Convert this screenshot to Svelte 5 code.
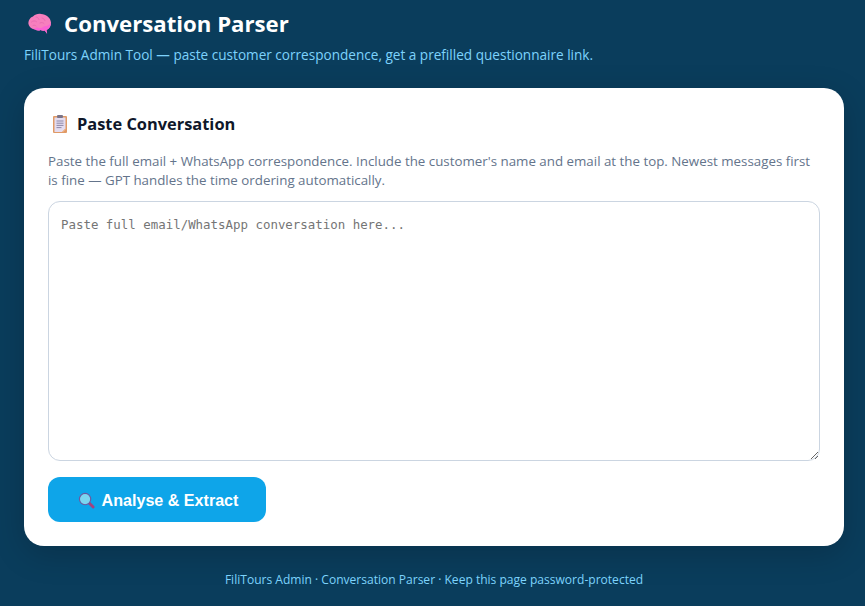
<script>
  let conversation = ''
  let busy = false

  function analyse() {
    busy = conversation.trim().length > 0
  }
</script>

<div class="page">
  <header class="head">
    <h1>
      <svg class="ico brain" viewBox="0 0 26 26" aria-hidden="true">
        <path d="M1.500 13.500C1 9.500 3 6.500 6 5.500 8 3.500 11 2.500 14 3c5 .3 9.500 3.500 10 8.500.3 3.500-1.500 6.300-4.500 7.500l.6 3.800-2.400-3.200c-1.700.5-3 .2-4-.6-2 .9-4.200.6-5.500-.6-2.700-.2-6-2-6.700-5.400z" fill="#f77fbe"/>
        <path d="M4 16.500c2.500 1.500 4.500 1 6-.3 2.500 1.800 5 .8 7-1 2.500.3 5-1 6.700-3-.1 3.300-1.700 5.800-4.200 6.800l.6 3.800-2.400-3.200c-1.700.5-3 .2-4-.6-2 .9-4.200.6-5.500-.6-1.400-.1-3-.7-4.200-1.900z" fill="#fb62d4"/>
        <path d="M4.500 11c1.500-1.500 3.500-1.500 5-.3M9 6c1.500 0 2.500 1 3 2.500M15 7c1.500.3 2.500 1.300 3 2.700M6 14.500c1.200-.5 2.200-.3 3 .4M13 12c1.500-.8 3-.6 4 .5" fill="none" stroke="#ea6db2" stroke-width="1" stroke-linecap="round"/>
      </svg>
      Conversation Parser
    </h1>
    <p>FiliTours Admin Tool — paste customer correspondence, get a prefilled questionnaire link.</p>
  </header>

  <main class="card">
    <h2>
      <svg class="ico clip" viewBox="0 0 18 20" aria-hidden="true">
        <rect x="2" y="2" width="14" height="17" rx="1" fill="#e09a66"/>
        <path d="M3.500 3.500h11v11l-3.500 3.500h-7.500z" fill="#e4dcef"/>
        <path d="M14.500 14.500v1.200l-2.300 2.300h-1.200z" fill="#f3b98c"/>
        <rect x="6" y="1" width="6" height="3" rx="1" fill="#7b7488"/>
        <path d="M5.500 7h7M5.500 9.200h7M5.500 11.400h7M5.500 13.600h5" stroke="#8f88a8" stroke-width="1"/>
      </svg>
      Paste Conversation
    </h2>
    <p class="hint">Paste the full email + WhatsApp correspondence. Include the customer's name and email at the top. Newest messages first is fine — GPT handles the time ordering automatically.</p>
    <textarea bind:value={conversation} placeholder="Paste full email/WhatsApp conversation here..."></textarea>
    <button on:click={analyse} disabled={busy}>
      <svg class="ico lens" viewBox="0 0 18 18" aria-hidden="true">
        <path d="M11.500 11.500l4.500 4.500" stroke="#a3427f" stroke-width="3" stroke-linecap="round"/>
        <circle cx="7.500" cy="7.500" r="6" fill="#7bd6f0" stroke="#6a5aa0" stroke-width="1.200"/>
      </svg>
      <span>Analyse &amp; Extract</span>
    </button>
  </main>

  <footer>FiliTours Admin · Conversation Parser · Keep this page password-protected</footer>
</div>

<style>
  :global(body) {
    background: #0a3d5c;
    font-family: "Open Sans", "Noto Sans", sans-serif;
  }

  .page {
    height: 606px;
    box-sizing: border-box;
    padding: 0 21px 0 24px;
    overflow: hidden;
    display: flex;
    flex-direction: column;
  }

  .head {
    height: 88px;
    flex: none;
  }

  h1 {
    margin: 0;
    padding: 7px 0 0 3px;
    display: flex;
    align-items: center;
    gap: 11px;
    color: #fff;
    font-size: 22.2px;
    line-height: 34px;
    font-weight: 700;
  }

  .brain { width: 26px; height: 26px; }

  .head p {
    margin: 4px 0 0;
    color: #7dd3fc;
    font-size: 13.58px;
    line-height: 20px;
  }

  .card {
    background: #fff;
    border-radius: 20px;
    padding: 24px;
    height: 458px;
    box-sizing: border-box;
    flex: none;
    box-shadow: 0 8px 32px rgba(0, 0, 0, 0.18);
  }

  h2 {
    margin: 0;
    display: flex;
    align-items: center;
    gap: 8px;
    padding-left: 3px;
    color: #0f172a;
    font-size: 16.4px;
    line-height: 24px;
    font-weight: 700;
  }

  .clip { width: 18px; height: 20px; }

  .hint {
    margin: 16px 0 11px;
    color: #64748b;
    font-size: 13.34px;
    line-height: 19px;
  }

  textarea {
    display: block;
    width: 100%;
    height: 260px;
    box-sizing: border-box;
    padding: 13px 12px 11px;
    border: 1.5px solid #cbd5e1;
    border-radius: 12px;
    outline: none;
    resize: vertical;
    font-family: "DejaVu Sans Mono", monospace;
    font-size: 12.43px;
    line-height: 20px;
    color: #0f172a;
  }

  textarea::placeholder {
    color: #757575;
  }

  button {
    margin-top: 16px;
    width: 218px;
    height: 45px;
    padding: 1px 0 0 2px;
    display: flex;
    align-items: center;
    justify-content: center;
    gap: 7px;
    border: none;
    border-radius: 12px;
    background: #0ea5e9;
    color: #fff;
    font-family: "Liberation Sans", Arial, sans-serif;
    font-size: 16.1px;
    font-weight: 700;
    cursor: pointer;
  }

  .lens { width: 17px; height: 17px; }

  footer {
    margin-top: 25px;
    color: #7dd3fc;
    font-size: 12.05px;
    line-height: 18px;
    text-align: center;
  }
</style>
